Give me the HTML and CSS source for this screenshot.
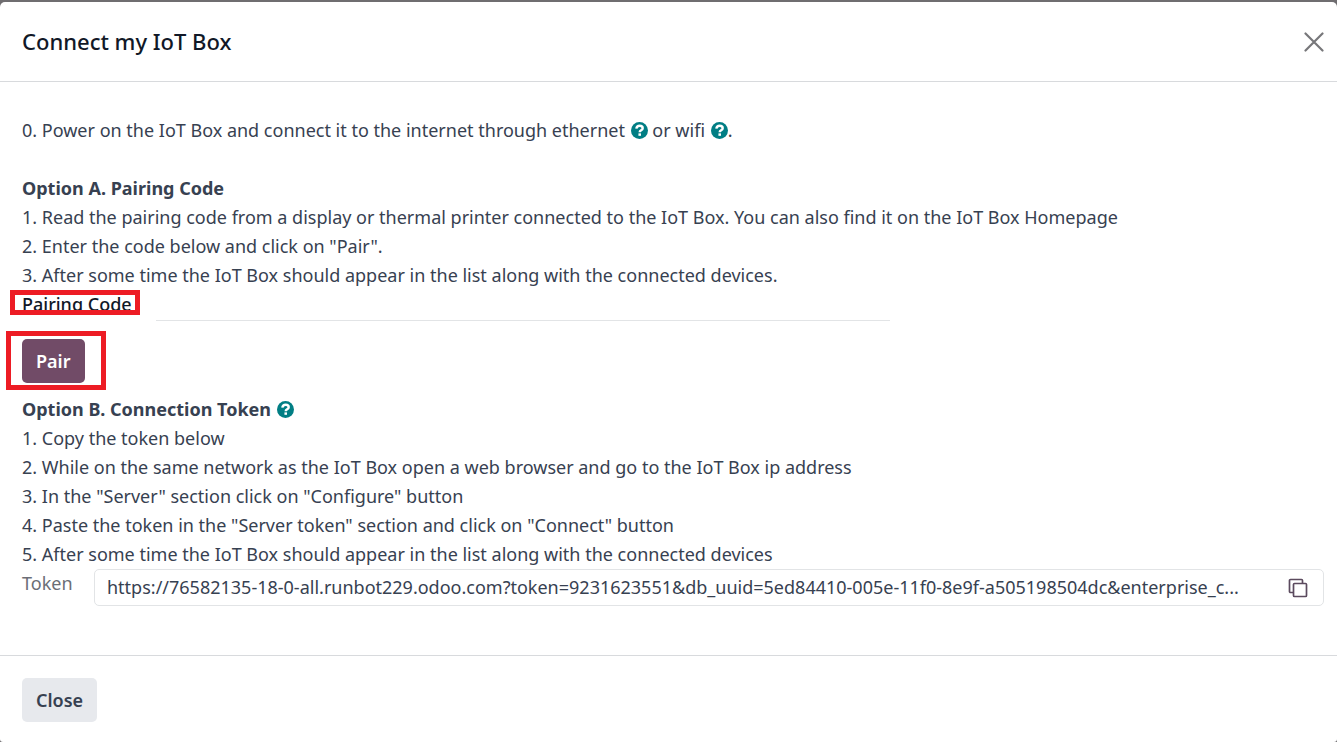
FILE: index.html
```html
<!DOCTYPE html>
<html lang="en">
<head>
  <meta charset="UTF-8" />
  <meta name="viewport" content="width=device-width, initial-scale=1.0"/>
  <title>Connect my IoT Box</title>
  <link rel="stylesheet" href="styles.css">
</head>
<body>

  <svg class="sprite" aria-hidden="true">
    <symbol id="help" viewBox="0 0 16 16">
      <circle cx="8" cy="8" r="8" fill="#017e84"/>
      <path d="M5 6.200C5.300 4.500 6.400 3.500 8.100 3.500c1.700 0 2.900 1 2.900 2.400 0 2-2.800 1.800-2.800 3.700" fill="none" stroke="#fff" stroke-width="2.300"/>
      <rect x="7" y="10.700" width="2.400" height="2.300" fill="#fff"/>
    </symbol>
  </svg>

  <div class="modal" role="dialog" aria-labelledby="title">
    <header class="modal-header">
      <h1 class="modal-title" id="title">Connect my IoT Box</h1>
      <button class="btn-close" type="button" aria-label="Close dialog">
        <svg width="20" height="20" viewBox="0 0 20 20"><path d="M1.500 1.500l17 17M18.500 1.500l-17 17" fill="none" stroke="#77777a" stroke-width="2.200" stroke-linecap="round"/></svg>
      </button>
    </header>

    <main class="modal-body">
      <p class="intro">0. Power on the IoT Box and connect it to the internet through ethernet <a class="help" href="#" aria-label="Ethernet help"><svg><use href="#help"/></svg></a> or wifi <a class="help" href="#" aria-label="Wifi help"><svg><use href="#help"/></svg></a>.</p>

      <section class="option">
        <h2>Option A. Pairing Code</h2>
        <p>1. Read the pairing code from a display or thermal printer connected to the IoT Box. You can also find it on the IoT Box Homepage</p>
        <p>2. Enter the code below and click on "Pair".</p>
        <p>3. After some time the IoT Box should appear in the list along with the connected devices.</p>
        <div class="pairing">
          <div class="pairing-name">
            <label for="pairing_code">Pairing Code</label>
            <span class="mark mark-label"></span>
          </div>
          <input id="pairing_code" class="pairing-input" type="text">
        </div>
        <div class="pair-action">
          <button class="btn btn-primary" type="button">Pair</button>
          <span class="mark mark-button"></span>
        </div>
      </section>

      <section class="option">
        <h2>Option B. Connection Token <a class="help" href="#" aria-label="Token help"><svg><use href="#help"/></svg></a></h2>
        <p>1. Copy the token below</p>
        <p>2. While on the same network as the IoT Box open a web browser and go to the IoT Box ip address</p>
        <p>3. In the "Server" section click on "Configure" button</p>
        <p>4. Paste the token in the "Server token" section and click on "Connect" button</p>
        <p>5. After some time the IoT Box should appear in the list along with the connected devices</p>
        <div class="token">
          <label for="token">Token</label>
          <div class="token-box">
            <input id="token" type="text" readonly value="https://76582135-18-0-all.runbot229.odoo.com?token=9231623551&amp;db_uuid=5ed84410-005e-11f0-8e9f-a505198504dc&amp;enterprise_c...">
            <button class="btn-copy" type="button" aria-label="Copy token">
              <svg width="20" height="20" viewBox="0 0 20 20" fill="none" stroke="#5b4a5e" stroke-width="1.700"><path d="M5 14.500H2.500a1 1 0 0 1-1-1v-11a1 1 0 0 1 1-1h11a1 1 0 0 1 1 1V5"/><rect x="5.500" y="5.500" width="13" height="13" rx="1"/></svg>
            </button>
          </div>
        </div>
      </section>
    </main>

    <footer class="modal-footer">
      <button class="btn btn-secondary" type="button">Close</button>
    </footer>
  </div>

</body>
</html>
```

FILE: styles.css
```css
* {
  box-sizing: border-box;
}
body {
  margin: 0;
  padding-top: 2px;
  background: #6f6d70;
  color: #374151;
  font-family: 'Segoe UI', 'Noto Sans', sans-serif;
  font-size: 18px;
  line-height: 29px;
}
h1, h2, p {
  margin: 0;
}
button, input {
  font: inherit;
  color: inherit;
}
button {
  cursor: pointer;
}
.sprite {
  display: none;
}
.modal {
  background: #fff;
  border-radius: 5px 5px 3px 3px;
}
.modal-header {
  display: flex;
  align-items: center;
  justify-content: space-between;
  min-height: 80px;
  padding: 0 13px 0 22px;
  border-bottom: 1px solid #d8dadd;
}
.modal-title {
  color: #111827;
  font-size: 22px;
  font-weight: 500;
}
.btn-close {
  display: flex;
  padding: 0;
  border: none;
  background: none;
}
.modal-body {
  padding: 34px 13px 49px 22px;
}
.intro {
  margin-bottom: 29px;
}
.option h2 {
  font-size: 18px;
  font-weight: 700;
}
.help svg {
  width: 17px;
  height: 17px;
  margin-left: 1px;
  vertical-align: -2px;
}
.pairing {
  display: flex;
  gap: 22px;
}
.pairing-name {
  position: relative;
  width: 112px;
  color: #111827;
  font-weight: 500;
  white-space: nowrap;
}
.pairing-input {
  flex: 1;
  max-width: 734px;
  min-width: 0;
  height: 31px;
  padding: 0;
  border: none;
  border-bottom: 1px solid #e2e4e6;
  outline: none;
}
.pair-action {
  position: relative;
  display: flex;
  padding: 18px 0 12px;
}
.btn {
  height: 44px;
  padding: 0 14px;
  border: none;
  border-radius: 5px;
  font-weight: 600;
}
.btn-primary {
  background: #714b67;
  color: #fff;
}
.btn-secondary {
  background: #e7e9ed;
}
/* red callouts drawn over the form */
.mark {
  position: absolute;
  border: 5px solid #ed1c24;
  pointer-events: none;
}
.mark-label {
  top: 0;
  left: -12px;
  width: 130px;
  height: 25px;
}
.mark-button {
  top: 10px;
  left: -16px;
  width: 100px;
  height: 59px;
}
.token {
  display: flex;
  gap: 22px;
}
.token label {
  width: 50px;
  color: #6b6e76;
}
.token-box {
  display: flex;
  flex: 1;
  align-items: center;
  gap: 20px;
  height: 37px;
  padding: 0 15px 0 12px;
  border: 1px solid #e2e4e6;
  border-radius: 5px;
}
.token-box input {
  flex: 1;
  min-width: 0;
  padding: 0;
  border: none;
  outline: none;
  background: none;
  text-overflow: ellipsis;
}
.btn-copy {
  display: flex;
  padding: 0;
  border: none;
  background: none;
}
.modal-footer {
  padding: 22px 22px 20px;
  border-top: 1px solid #d8dadd;
}
.modal-footer .btn {
  display: block;
}
```
